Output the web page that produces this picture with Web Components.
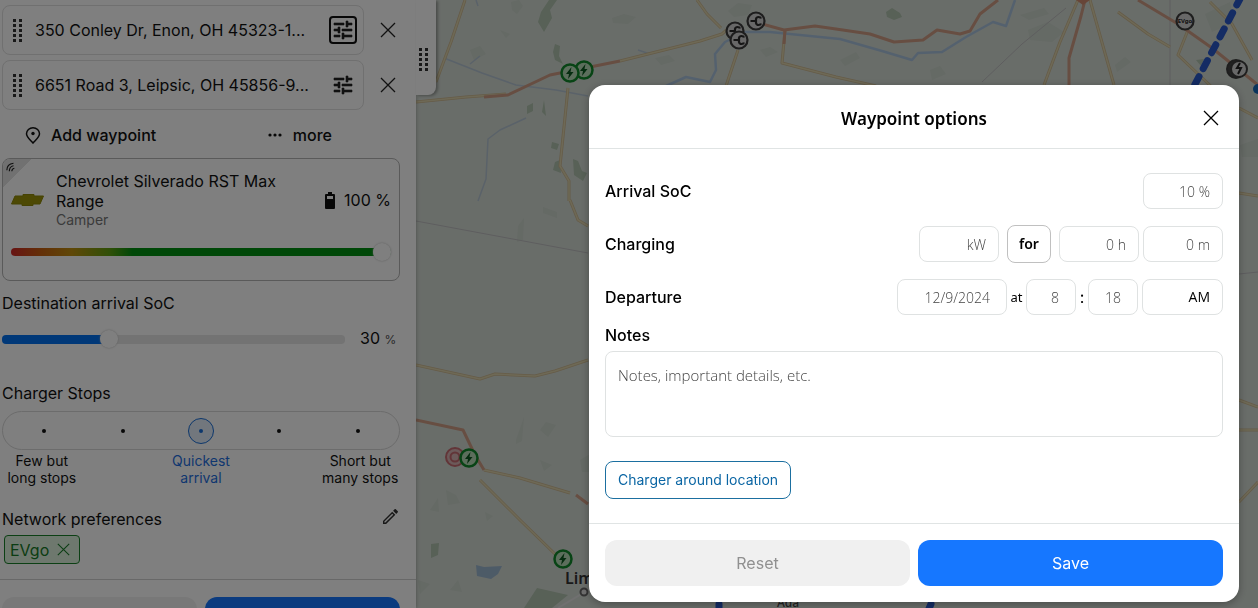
<!DOCTYPE html>
<html lang="en">
<head>
<meta charset="utf-8">
<title>Trip planner</title>
<style>
  html, body { height: 100%; }
  body {
    margin: 0;
    overflow: hidden;
    font: 16px/20px Inter, "Liberation Sans", sans-serif;
    color: #111;
    background: #fff;
  }
</style>
</head>
<body>
<trip-planner></trip-planner>

<script>
const define = (name, html) => {
  const template = document.createElement('template');
  template.innerHTML = `<style>
    *, *::before, *::after { box-sizing: border-box; }
    button { font: inherit; color: inherit; background: none; border: 0; padding: 0; margin: 0; cursor: pointer; }
  </style>` + html;
  customElements.define(name, class extends HTMLElement {
    constructor() {
      super();
      this.attachShadow({ mode: 'open' }).append(template.content.cloneNode(true));
    }
  });
};

/* ---------- icons ---------- */
const ICONS = {
  tune: [24, '<path fill="currentColor" d="M3 17v2h6v-2H3zM3 5v2h10V5H3zm10 16v-2h8v-2h-8v-2h-2v6h2zM7 9v2H3v2h4v2h2V9H7zm14 4v-2H11v2h10zm-6-4h2V7h4V5h-4V3h-2v6z" stroke="currentColor" stroke-width=".6"/>'],
  close: [16, '<path d="M1 1l14 14M15 1L1 15" stroke="currentColor" stroke-width="1.3" fill="none"/>'],
  grip: [10, '<g fill="currentColor"><path d="M0 0h3v3H0zM6 0h3v3H6zM0 5h3v3H0zM6 5h3v3H6zM0 10h3v3H0zM6 10h3v3H6zM0 15h3v3H0zM6 15h3v3H6zM0 20h3v3H0zM6 20h3v3H6z"/></g>', 23],
  pin: [16, '<path d="M8 16C5 12.600 1.500 10 1.500 6.800a6.500 6 0 0 1 13 0C14.500 10 11 12.600 8 16z" fill="none" stroke="currentColor" stroke-width="1.500"/><circle cx="8" cy="6.500" r="1.700" fill="currentColor"/>', 17],
  dots: [16, '<g fill="currentColor"><circle cx="3" cy="2" r="1.600"/><circle cx="8" cy="2" r="1.600"/><circle cx="13" cy="2" r="1.600"/></g>', 4],
  battery: [10, '<path fill="currentColor" d="M3 0h4v2H9a1 1 0 0 1 1 1v13a1 1 0 0 1-1 1H1a1 1 0 0 1-1-1V3a1 1 0 0 1 1-1h2z"/><path d="M2 4h6v3H2z" fill="#fff"/>', 17],
  pencil: [18, '<path fill="currentColor" fill-rule="evenodd" d="M0 14.250V18h3.750L14.810 6.940l-3.750-3.750zM2.920 16.300H1.700v-1.220l9.360-9.480 1.300 1.300zM17.710 4.040a1 1 0 0 0 0-1.410L15.370.290a1 1 0 0 0-1.410 0L12.130 2.120l3.750 3.750z"/>'],
  signal: [12, '<g fill="none" stroke="currentColor" stroke-width="1.400"><path d="M1 10C1 5 4 2 9 1.500"/><path d="M4 11C4 7 6 5 9 4.500"/><path d="M7 11C7 9 8 8 10 7.500"/></g>'],
};
customElements.define('app-icon', class extends HTMLElement {
  constructor() { super(); this.attachShadow({ mode: 'open' }); }
  connectedCallback() {
    const [w, body, h = w] = ICONS[this.getAttribute('name')];
    const size = Number(this.getAttribute('size') || w);
    this.shadowRoot.innerHTML = `<style>:host{display:block;flex:none}svg{display:block}</style>
      <svg width="${size}" height="${Math.round(size * h / w)}" viewBox="0 0 ${w} ${h}" aria-hidden="true">${body}</svg>`;
  }
});

/* ---------- one stop of the route ---------- */
define('route-stop', `
  <style>
    :host { display: grid; grid-template-columns: 1fr 36px; align-items: center; padding-bottom: 5px; }
    .box {
      display: flex; align-items: center; gap: 12px; height: 50px; padding: 0 6px 0 10px;
      border: 1px solid #e0e0e0; border-radius: 8px; min-width: 0;
    }
    .grip { color: #333; }
    .address { flex: 1; min-width: 0; white-space: nowrap; overflow: hidden; }
    .tune { width: 28px; height: 28px; border: 2px solid transparent; border-radius: 4px; display: grid; place-items: center; color: #222; }
    :host([active]) .tune { border-color: #111; }
    .remove { justify-self: center; color: #222; margin-left: 12px; }
  </style>
  <div class="box">
    <app-icon class="grip" name="grip"></app-icon>
    <span class="address"><slot></slot></span>
    <button class="tune" aria-label="Waypoint options"><app-icon name="tune"></app-icon></button>
  </div>
  <button class="remove" aria-label="Remove waypoint"><app-icon name="close"></app-icon></button>
`);

/* ---------- vehicle ---------- */
define('vehicle-card', `
  <style>
    :host { display: block; position: relative; overflow: hidden; height: 123px; padding: 12px 8px 0; border: 1px solid #b4b4b4; border-radius: 8px; }
    .corner { position: absolute; left: 0; top: 0; width: 28px; height: 28px; background: linear-gradient(135deg, #e2e2e2 50%, transparent 50%); padding: 3px; color: #222; }
    .info { display: grid; grid-template-columns: 33px 1fr auto; column-gap: 12px; align-items: center; }
    .kind { font-size: 14px; line-height: 18px; color: #777; }
    .charge { display: flex; align-items: center; gap: 9px; }
    input {
      appearance: none; display: block; width: 100%; height: 20px; margin: 13px 0 0; background: none;
    }
    input::-webkit-slider-runnable-track {
      height: 8px; border-radius: 4px;
      background: linear-gradient(90deg, #d02828, #c86010 8%, #c09010 16%, #60a010 26%, #009010 32%);
    }
    input::-webkit-slider-thumb {
      appearance: none; width: 18px; height: 18px; margin-top: -5px; border-radius: 50%; background: #fff; box-shadow: 0 0 2px #bbb;
    }
  </style>
  <div class="corner"><app-icon name="signal" size="10"></app-icon></div>
  <div class="info">
    <svg width="33" height="12" viewBox="0 0 33 12" aria-hidden="true"><path fill="#9a9208" stroke="#8c8608" d="M4 2h8V.500h11V2h9.500L29 10h-7v1.500H11V10H.500z"/></svg>
    <div>
      <div><slot></slot></div>
      <div class="kind"><slot name="kind"></slot></div>
    </div>
    <div class="charge"><app-icon name="battery"></app-icon><slot name="charge"></slot></div>
  </div>
  <input type="range" min="0" max="100" value="100" aria-label="State of charge">
`);

/* ---------- destination charge ---------- */
define('arrival-soc', `
  <style>
    :host { display: block; }
    label { display: block; }
    .line { display: grid; grid-template-columns: 1fr 55px; align-items: center; height: 20px; margin-top: 15px; }
    input { appearance: none; width: 100%; height: 20px; margin: 0; background: none; }
    input::-webkit-slider-runnable-track {
      height: 9px; border-radius: 4px; background: linear-gradient(90deg, #0070f0 30%, #e6e6e6 30%);
    }
    input::-webkit-slider-thumb {
      appearance: none; width: 18px; height: 18px; margin-top: -5px; border-radius: 50%; background: #fff; box-shadow: 0 0 2px #bbb;
    }
    output { padding-left: 15px; white-space: nowrap; }
    small { font-size: 12px; color: #555; }
  </style>
  <label for="soc"><slot></slot></label>
  <div class="line">
    <input id="soc" type="range" min="0" max="100" value="30">
    <output for="soc">30 <small>%</small></output>
  </div>
`);

/* ---------- stop preference ---------- */
define('stop-picker', `
  <style>
    :host { display: block; }
    fieldset { border: 0; margin: 0; padding: 0; min-width: 0; }
    legend { padding: 0; }
    .rail { display: grid; grid-template-columns: repeat(5, 1fr); place-items: center; height: 39px; margin-top: 8px; border: 1px solid #d8d8d8; border-radius: 20px; padding: 0 2px; }
    input { appearance: none; width: 26px; height: 26px; margin: 0; border-radius: 50%; border: 1px solid transparent; display: grid; place-items: center; }
    input::before { content: ""; width: 4px; height: 4px; border-radius: 50%; background: #111; }
    input:checked { border-color: #1a6fd8; background: #e4eefb; }
    input:checked::before { background: #1a6fd8; }
    .names { display: grid; grid-template-columns: repeat(5, 1fr); margin: 2px 0 0; font-size: 14px; line-height: 17px; text-align: center; }
    .names label { white-space: nowrap; justify-self: center; }
    .names label:nth-child(2) { grid-column: 3; color: #1f6fe0; }
    .names label:nth-child(3) { grid-column: 5; }
  </style>
  <fieldset>
    <legend>Charger Stops</legend>
    <div class="rail">
      <input type="radio" name="stops" id="few">
      <input type="radio" name="stops" aria-label="Fewer stops">
      <input type="radio" name="stops" id="quick" checked>
      <input type="radio" name="stops" aria-label="More stops">
      <input type="radio" name="stops" id="many">
    </div>
    <div class="names">
      <label for="few">Few but<br>long stops</label>
      <label for="quick">Quickest<br>arrival</label>
      <label for="many">Short but<br>many stops</label>
    </div>
  </fieldset>
`);

/* ---------- side panel ---------- */
define('side-panel', `
  <style>
    :host { display: block; position: relative; z-index: 1; background: #fefefe; box-shadow: 0 0 4px rgba(0,0,0,.3); min-height: 0; }
    .content { height: 100%; overflow: hidden; padding: 5px 16px 0 2px; }
    .handle { position: absolute; left: 100%; top: 0; width: 20px; height: 95px; border-radius: 0 0 8px 0; background: #fefefe; box-shadow: 2px 1px 3px rgba(0,0,0,.3); display: grid; padding: 48px 0 0 3px; color: #333; }
    .actions { display: flex; height: 40px; margin-bottom: 3px; padding: 0 68px 0 23px; justify-content: space-between; align-items: center; font-weight: 500; }
    .actions button { display: flex; align-items: center; gap: 10px; }
    arrival-soc { margin-top: 12px; }
    stop-picker { margin-top: 35px; }
    .network { display: flex; justify-content: space-between; align-items: center; height: 20px; margin-top: 23px; padding-right: 2px; }
    .network button { padding-bottom: 6px; color: #333; }
    .chip { display: flex; align-items: center; gap: 8px; height: 29px; margin: 6px 0 15px 2px; padding: 0 9px 0 5px; border: 1px solid #188028; border-radius: 4px; background: #dcf0dc; color: #167a26; }
    .foot { display: grid; grid-template-columns: 1fr 1fr; gap: 8px; margin: 0 -16px 0 -2px; padding: 17px 16px 0 2px; border-top: 1px solid #d0d0d0; }
    .foot button { height: 46px; border-radius: 12px; background: #f0f0f0; color: #888; }
    .foot .primary { background: #1677ff; color: #fff; }
  </style>
  <div class="content">
    <route-stop active>350 Conley Dr, Enon, OH 45323-1...</route-stop>
    <route-stop>6651 Road 3, Leipsic, OH 45856-9...</route-stop>
    <div class="actions">
      <button><app-icon name="pin"></app-icon>Add waypoint</button>
      <button><app-icon name="dots"></app-icon>more</button>
    </div>
    <vehicle-card>Chevrolet Silverado RST Max Range<span slot="kind">Camper</span><span slot="charge">100 %</span></vehicle-card>
    <arrival-soc>Destination arrival SoC</arrival-soc>
    <stop-picker></stop-picker>
    <div class="network">Network preferences<button aria-label="Edit networks"><app-icon name="pencil" size="15"></app-icon></button></div>
    <button class="chip">EVgo<app-icon name="close" size="13"></app-icon></button>
    <div class="foot"><button aria-label="Clear"></button><button class="primary" aria-label="Plan"></button></div>
  </div>
  <div class="handle"><app-icon name="grip"></app-icon></div>
`);

/* ---------- map ---------- */
define('route-map', `
  <style>
    :host { display: block; overflow: hidden; background: #d3dad3; min-width: 0; min-height: 0; }
    svg { display: block; width: 100%; height: 100%; }
    .casing { fill: none; stroke: #cbb78f; stroke-width: 3; stroke-linejoin: round; }
    .road { fill: none; stroke: #dcd3ad; stroke-width: 1.500; stroke-linejoin: round; }
    .main { fill: none; stroke: #cf9c84; stroke-width: 3; stroke-linejoin: round; }
    .water { fill: none; stroke: #a9c2dd; stroke-width: 2.500; stroke-linejoin: round; }
    .water .brook { stroke: #b4c4d2; stroke-width: 1.500; }
    .limit { fill: none; stroke: #bcbcbe; stroke-width: 1; }
    .wood { fill: #b0c2ae; }
    .faint { fill: #cad4ca; }
    .route { fill: none; stroke: #2858c8; stroke-width: 7; stroke-linecap: round; stroke-dasharray: 9 9; }
    text { font-family: "Noto Sans", sans-serif; }
  </style>
  <svg viewBox="416 0 842 608" preserveAspectRatio="xMinYMin slice" role="img" aria-label="Map">
    <defs>
      <g id="bolt"><circle r="8.500" fill="#b8dcb8" stroke="#10882a" stroke-width="2.500"/><path d="M1.500-6L-4 1h3l-1 5 5.500-7H.500z" fill="#0c5a20"/></g>
      <g id="plug"><circle r="8.500" fill="#d0d0d0" stroke="#3c3c3c" stroke-width="2.200"/><path d="M-5.500 0H0M5-2.500Q4.500-4 2.500-4T0-2v4q.500 2 2.500 2T5 2.500" fill="none" stroke="#2c2c2c" stroke-width="2.200"/></g>
    </defs>
    <g class="faint">
      <path d="M470 50l10-4 6 8-12 6zM612 18l12-4 12 3-8 7-15-1zM655 58l14-3 6 6-14 4zM728 11l10-8 14 2-4 10-14 2zM760 50l10-3 8 5-12 5zM1028 30l20-8 16 10-12 10-22-2zM1205 14l25-12 4 20-22 10zM1115 65l10-8 6 5-14 10zM1240 145l18-6v18h-16zM930 70l10-4 6 8-14 6zM840 60l16-8 4 6-15 8zM1020 15l24-7 5 6-20 6z"/>
      <path d="M446 490l10 5 4 8-12 2zM540 460l12 5-8 6zM485 512l8 4-6 5zM540 430l6-8 10 3-8 12zM450 590l8-10 4 12zM430 510l8-12 1 14zM418 580l12 4-10 10zM580 460l10-6v18h-8zM500 30l10 4-4 4z"/>
      <path d="M516 440l8-23-2 24-6 3zM543 207l14 5v6l-14-5zM518 226l6-8-1 22-6 2zM511 2l8-2 4 6-6 8-5-4z"/>
    </g>
    <g class="wood">
      <path d="M549 0h8l-7 10 2 8-8 14-6-10 3-10zM555 44l5 2-1 10 4 8-8-4-2-8zM527 106l6-3 0 8-6 3zM544 100l2 16-4-4zM552 142l7 2-2 6-6-2zM555 162l5-2 1 13-8-3zM573 159l5 2 4 10 5 2-4 8-9-6zM886 12l6-4 8 5 2 4-8 3-7-3zM431 544l8-1-1 12-7 3zM1196 60l8-1-3 7z"/>
      <path d="M537 588l31 7-16 13h-28z"/>
    </g>
    <path fill="#9bb6cf" d="M476 565l8 2 18-1-4 8-7 5-14-3z"/>
    <g class="water">
      <path d="M666 86l20-9 24 5 6-12-1-16 10-12 20-10h25l40 4 30 3 42 12 30 9 6-7 24-1 24-15 27-15 13 4 9-26"/>
      <path class="brook" d="M588 96l-32-6-40-5-34-12-38-15M526 118l-26 12-12 9-2 40-8 22M480 56l-10 8M476 0l2 6M638 50l12 4"/>
    </g>
    <g class="limit">
      <path d="M416 221l172 32M1170 0v85M982 82l40-38 44-36M1239 274l19-2"/>
    </g>
    <g>
      <path class="casing" d="M416 102l50-5 40-3M465 0l-14 42-15 40M620 61l80-20 22-7 8-7M697 0l10 14 14 14M738 50l-12 36M785 30l-3 33 54 14 40 9M568 88l-8 78 9 15v20M570 200l8 20 10 6M1078 0l-18 42-16 43M1090 0l24 85M1188 30l-10 25 38 36M1118 12l30 22 22 13M1239 108l19 10M1239 193l19 3M1239 400l19 7M1239 430h19M1239 502l19-20M416 365l64 14 15-5 40 2 20-5 33-11M484 470l36 8 50 15M480 480l40 40 36 35M1252 60l-20-36-22-22"/>
      <path class="road" d="M416 102l50-5 40-3M465 0l-14 42-15 40M620 61l80-20 22-7 8-7M697 0l10 14 14 14M738 50l-12 36M785 30l-3 33 54 14 40 9M568 88l-8 78 9 15v20M570 200l8 20 10 6M1078 0l-18 42-16 43M1090 0l24 85M1188 30l-10 25 38 36M1118 12l30 22 22 13M1239 108l19 10M1239 193l19 3M1239 400l19 7M1239 430h19M1239 502l19-20M416 365l64 14 15-5 40 2 20-5 33-11M484 470l36 8 50 15M480 480l40 40 36 35M1252 60l-20-36-22-22"/>
      <path class="main" d="M484 97l24-2 42-20 70-14M762 24l22 6 31-4 21 3 34 5 24 8 29-2 14-10 23 4 10-3 10-17 18-14M785 30l-1 14M1085 0l-4 16-12 42v28M1138 0l40 24 34 24 46 37M416 420l47 10 12 25 9 15M576 495l12 9"/>
    </g>
    <path fill="#cf8b70" d="M1076 0h14l-7 5z"/>
    <path class="route" d="M1241-3L1193 88M719 604v10M931 604l-6 14"/>
    <circle cx="1258" cy="89" r="5" fill="#1769b8"/>
    <g fill="#d8b4b4" stroke="#c46a70" stroke-width="2"><circle cx="455" cy="457" r="9"/><circle cx="455" cy="457" r="4.500" fill="none"/></g>
    <use href="#bolt" x="584" y="70"/>
    <use href="#bolt" x="570" y="73"/>
    <use href="#bolt" x="469" y="458"/>
    <use href="#bolt" x="563" y="559"/>
    <use href="#plug" x="735" y="31"/>
    <use href="#plug" x="739" y="40"/>
    <use href="#plug" x="756" y="21"/>
    <g transform="translate(1185 21)"><circle r="8.500" fill="#d0d0d0" stroke="#3c3c3c" stroke-width="2.200"/><text text-anchor="middle" y="2" font-size="6" font-weight="700" fill="#222">EVgo</text></g>
    <g><circle cx="1236" cy="69" r="9" fill="#444" stroke="#3c3c3c" stroke-width="2"/><circle cx="1239" cy="69" r="8" fill="#d0d0d0" stroke="#3c3c3c" stroke-width="2"/><path d="M1240 63l-3 5h4l-3 6" fill="none" stroke="#222" stroke-width="2"/></g>
    <g fill="none"><path stroke="#e0e0e0" stroke-width="2" d="M588 590l-30 18"/><circle cx="584" cy="592" r="3.500" stroke="#666" stroke-width="2" fill="#ddd"/></g>
    <text x="565" y="584" font-size="16" font-weight="600" fill="#333">Lima</text>
    <text x="777" y="607" font-size="12" font-weight="500" fill="#444">Ada</text>
  </svg>
`);

/* ---------- one labelled row of the dialog ---------- */
define('form-row', `
  <style>
    :host { display: flex; align-items: center; justify-content: space-between; height: 38px; }
    .fields { display: flex; align-items: center; }
  </style>
  <slot name="label"></slot>
  <div class="fields"><slot></slot></div>
`);

/* ---------- dialog ---------- */
define('waypoint-dialog', `
  <style>
    :host { display: block; width: 650px; max-width: 100%; border-radius: 16px; background: #fff; color: #000; box-shadow: 0 2px 8px rgba(0,0,0,.3); }
    header { display: grid; grid-template-columns: 1fr auto 1fr; align-items: center; height: 64px; padding: 2px 20px 0; border-bottom: 1px solid #e0e4e4; }
    h2 { grid-column: 2; margin: 0; padding-top: 2px; font: 600 17px/24px "Noto Sans", sans-serif; }
    header button { justify-self: end; }
    .body { padding: 23px 16px 24px; }
    form-row { margin-bottom: 15px; }
    form-row:last-of-type { margin-bottom: 9px; }
    label { font-weight: 500; }
    input, select, textarea {
      font: 300 14px/20px "Open Sans", "Noto Sans", sans-serif; color: #000; background: #fff;
      border: 1px solid #dfe2e2; border-radius: 8px; margin: 0; outline: 0;
    }
    input, select { width: 80px; height: 36px; padding: 0 12px; text-align: right; }
    ::placeholder { color: #444; opacity: 1; }
    input.date { width: 110px; padding-right: 16px; }
    input.time { width: 50px; padding-right: 16px; padding-left: 4px; }
    select { appearance: none; text-align-last: right; font-weight: 400; width: 81px; }
    .for { width: 44px; height: 38px; margin: 0 8px; border: 1px solid #c0c0c0; border-radius: 8px; font: 600 14px/20px "Noto Sans", sans-serif; }
    .gap { margin-left: 4px; }
    .word { font: 400 13px/20px "Noto Sans", sans-serif; text-align: center; width: 19px; }
    .colon { width: 12px; text-align: center; }
    textarea { display: block; width: 100%; height: 86px; margin-top: 6px; padding: 13px 12px; resize: none; font-size: 15px; }
    .around { display: block; height: 38px; margin-top: 24px; padding: 0 12px; border: 1px solid #1b6fa0; border-radius: 8px; color: #0b66a4; font-size: 14px; }
    footer { display: grid; grid-template-columns: 1fr 1fr; gap: 8px; padding: 16px; border-top: 1px solid #e0e4e4; }
    footer button { height: 46px; border-radius: 12px; background: #f0f0f0; color: #909090; }
    footer .save { background: #1677ff; color: #fff; }
  </style>
  <header>
    <h2>Waypoint options</h2>
    <button aria-label="Close"><app-icon name="close"></app-icon></button>
  </header>
  <div class="body">
    <form-row>
      <label slot="label" for="arrival">Arrival SoC</label>
      <input id="arrival" placeholder="10 %">
    </form-row>
    <form-row>
      <label slot="label" for="power">Charging</label>
      <input id="power" placeholder="kW">
      <button class="for">for</button>
      <input aria-label="Hours" placeholder="0 h">
      <input class="gap" aria-label="Minutes" placeholder="0 m">
    </form-row>
    <form-row>
      <label slot="label" for="date">Departure</label>
      <input id="date" class="date" placeholder="12/9/2024">
      <span class="word">at</span>
      <input class="time" aria-label="Hour" placeholder="8">
      <span class="colon">:</span>
      <input class="time" aria-label="Minute" placeholder="18">
      <select class="gap" aria-label="Half of day"><option>AM</option><option>PM</option></select>
    </form-row>
    <label for="notes">Notes</label>
    <textarea id="notes" placeholder="Notes, important details, etc."></textarea>
    <button class="around">Charger around location</button>
  </div>
  <footer>
    <button>Reset</button>
    <button class="save">Save</button>
  </footer>
`);

/* ---------- page ---------- */
define('trip-planner', `
  <style>
    :host { display: grid; grid-template-columns: 416px 1fr; grid-template-rows: 100vh; }
    .backdrop {
      position: fixed; inset: 0; z-index: 2; background: rgba(0,0,0,.5);
      display: flex; justify-content: flex-end; align-items: flex-end; padding: 0 19px 6px;
    }
  </style>
  <side-panel></side-panel>
  <route-map></route-map>
  <div class="backdrop"><waypoint-dialog role="dialog" aria-label="Waypoint options"></waypoint-dialog></div>
`);
</script>
</body>
</html>
